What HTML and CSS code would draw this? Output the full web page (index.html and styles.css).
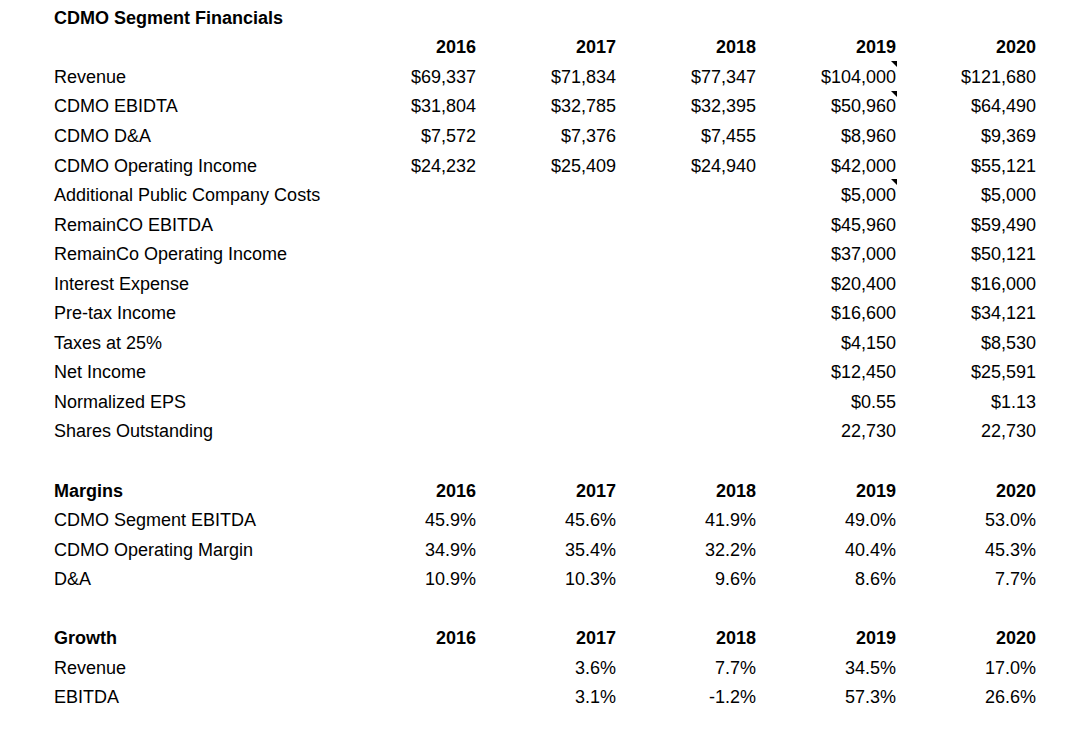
FILE: index.html
```html
<!DOCTYPE html>
<html>
<head>
<meta charset="utf-8">
<link rel="stylesheet" href="styles.css">
</head>
<body>
<table class="sheet">
<colgroup><col class="c-label"><col class="c-num"><col class="c-num"><col class="c-num"><col class="c-num"><col class="c-num"></colgroup>
<tbody>
<tr><td class="b">CDMO Segment Financials</td><td></td><td></td><td></td><td></td><td></td></tr>
<tr class="hdr"><td></td><td>2016</td><td>2017</td><td>2018</td><td>2019</td><td>2020</td></tr>
<tr><td>Revenue</td><td>$69,337</td><td>$71,834</td><td>$77,347</td><td class="note">$104,000</td><td>$121,680</td></tr>
<tr><td>CDMO EBIDTA</td><td>$31,804</td><td>$32,785</td><td>$32,395</td><td class="note">$50,960</td><td>$64,490</td></tr>
<tr><td>CDMO D&amp;A</td><td>$7,572</td><td>$7,376</td><td>$7,455</td><td>$8,960</td><td>$9,369</td></tr>
<tr><td>CDMO Operating Income</td><td>$24,232</td><td>$25,409</td><td>$24,940</td><td>$42,000</td><td>$55,121</td></tr>
<tr><td>Additional Public Company Costs</td><td></td><td></td><td></td><td class="note">$5,000</td><td>$5,000</td></tr>
<tr><td>RemainCO EBITDA</td><td></td><td></td><td></td><td>$45,960</td><td>$59,490</td></tr>
<tr><td>RemainCo Operating Income</td><td></td><td></td><td></td><td>$37,000</td><td>$50,121</td></tr>
<tr><td>Interest Expense</td><td></td><td></td><td></td><td>$20,400</td><td>$16,000</td></tr>
<tr><td>Pre-tax Income</td><td></td><td></td><td></td><td>$16,600</td><td>$34,121</td></tr>
<tr><td>Taxes at 25%</td><td></td><td></td><td></td><td>$4,150</td><td>$8,530</td></tr>
<tr><td>Net Income</td><td></td><td></td><td></td><td>$12,450</td><td>$25,591</td></tr>
<tr><td>Normalized EPS</td><td></td><td></td><td></td><td>$0.55</td><td>$1.13</td></tr>
<tr><td>Shares Outstanding</td><td></td><td></td><td></td><td>22,730</td><td>22,730</td></tr>
<tr><td></td><td></td><td></td><td></td><td></td><td></td></tr>
<tr class="hdr"><td>Margins</td><td>2016</td><td>2017</td><td>2018</td><td>2019</td><td>2020</td></tr>
<tr><td>CDMO Segment EBITDA</td><td>45.9%</td><td>45.6%</td><td>41.9%</td><td>49.0%</td><td>53.0%</td></tr>
<tr><td>CDMO Operating Margin</td><td>34.9%</td><td>35.4%</td><td>32.2%</td><td>40.4%</td><td>45.3%</td></tr>
<tr><td>D&amp;A</td><td>10.9%</td><td>10.3%</td><td>9.6%</td><td>8.6%</td><td>7.7%</td></tr>
<tr><td></td><td></td><td></td><td></td><td></td><td></td></tr>
<tr class="hdr"><td>Growth</td><td>2016</td><td>2017</td><td>2018</td><td>2019</td><td>2020</td></tr>
<tr><td>Revenue</td><td></td><td>3.6%</td><td>7.7%</td><td>34.5%</td><td>17.0%</td></tr>
<tr><td>EBITDA</td><td></td><td>3.1%</td><td>-1.2%</td><td>57.3%</td><td>26.6%</td></tr>
</tbody>
</table>
</body>
</html>
```
FILE: styles.css
```css
html, body {
  margin: 0;
  padding: 0;
  background: #ffffff;
}
body {
  padding: 3px 0 0 51px;
  font-family: "Liberation Sans", Arial, sans-serif;
  font-size: 18px;
  color: #000000;
}
.sheet {
  border-collapse: collapse;
  table-layout: fixed;
  width: 988px;
}
.c-label { width: 288px; }
.c-num { width: 140px; }
.sheet td {
  height: 29.55px;
  padding: 0 3px;
  line-height: 20px;
  white-space: nowrap;
  text-align: right;
  vertical-align: middle;
  position: relative;
}
.sheet td:first-child {
  text-align: left;
}
.b, .hdr td {
  font-weight: bold;
}
.note::after {
  content: "";
  position: absolute;
  top: -1px;
  right: 2px;
  width: 0;
  height: 0;
  border-top: 6px solid #000;
  border-left: 6px solid transparent;
}
```
